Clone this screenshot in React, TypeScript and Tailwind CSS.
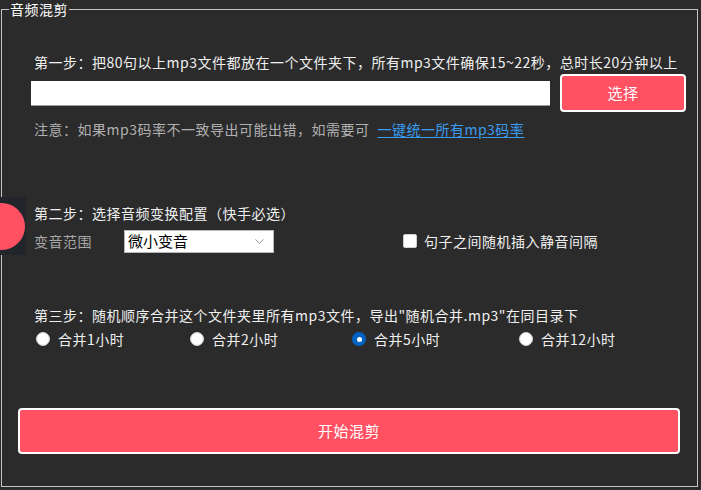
import { ChevronDown } from "lucide-react";

const font = { fontFamily: '"Noto Sans CJK SC", "Noto Sans", sans-serif' };

function Radio({ label, checked, left }: { label: string; checked?: boolean; left: string }) {
  return (
    <div className={`flex items-center ${left}`}>
      {checked ? (
        <span className="flex h-[14px] w-[14px] items-center justify-center rounded-full bg-[#0063c4]">
          <span className="h-[5px] w-[5px] rounded-full bg-white" />
        </span>
      ) : (
        <span className="h-[14px] w-[14px] rounded-full border border-[#d0d0d0] bg-white" />
      )}
      <span className="ml-[8px]">{label}</span>
    </div>
  );
}

export default function App() {
  return (
    <div
      className="relative h-[490px] w-[701px] bg-[#2b2b2b] pl-[1px] pt-[9px] text-[14px] leading-[20px] tracking-[0.5px] whitespace-nowrap text-[#f0f0f0]"
      style={font}
    >
      <div className="relative h-[478px] w-[697px] border border-[#c4c4c4]">
        <div className="absolute left-[7px] top-[-10px] bg-[#2b2b2b] px-[1px] leading-[18px] text-white">
          音频混剪
        </div>

        {/* step 1 */}
        <div className="mt-[42px] pl-[32px]">
          第一步：把80句以上mp3文件都放在一个文件夹下，所有mp3文件确保15~22秒，总时长20分钟以上
        </div>
        <div className="mt-[2px] flex h-[38px] items-center pl-[29px]">
          <div className="h-[25px] w-[519px] border-b border-[#9a9a9a] bg-white" />
          <button className="ml-[10px] h-[38px] w-[126px] rounded-[4px] border-2 border-white bg-[#ff5162] text-[15px] text-white">
            选择
          </button>
        </div>
        <div className="mt-[7px] pl-[32px] text-[#b0b0b0]">
          注意：如果mp3码率不一致导出可能出错，如需要可
          <a className="ml-[8px] text-[#3a9cf0] underline underline-offset-2">一键统一所有mp3码率</a>
        </div>

        {/* step 2 */}
        <div className="mt-[64px] pl-[32px]">第二步：选择音频变换配置（快手必选）</div>
        <div className="mt-[6px] flex h-[24px] items-center">
          <span className="ml-[32px] w-[90px] text-[#a8a8a8]">变音范围</span>
          <div className="flex h-[23px] w-[150px] items-center justify-between border border-[#b8b8b8] bg-white pl-[3px] pr-[6px] text-[15px] tracking-normal text-black">
            <span>微小变音</span>
            <ChevronDown size={15} strokeWidth={1.2} className="text-[#707070]" />
          </div>
          <span className="ml-[129px] h-[14px] w-[14px] rounded-[2px] border border-[#d0d0d0] bg-white" />
          <span className="ml-[7px]">句子之间随机插入静音间隔</span>
        </div>

        {/* step 3 */}
        <div className="mt-[52px] pl-[32px]">
          第三步：随机顺序合并这个文件夹里所有mp3文件，导出"随机合并.mp3"在同目录下
        </div>
        <div className="mt-[4px] flex h-[20px] items-center pl-[34px]">
          <Radio label="合并1小时" left="w-[154px]" />
          <Radio label="合并2小时" left="w-[162px]" />
          <Radio label="合并5小时" checked left="w-[167px]" />
          <Radio label="合并12小时" left="" />
        </div>

        <div className="mt-[59px] pl-[16px]">
          <button className="h-[46px] w-[662px] rounded-[4px] border-2 border-white bg-[#ff5162] text-[15px] text-white">
            开始混剪
          </button>
        </div>
      </div>

      <div className="absolute left-0 top-[197px] h-[58px] w-[26px] overflow-hidden bg-[#22262b]">
        <div className="absolute left-[-22px] top-[6px] h-[47px] w-[47px] rounded-full bg-[#ff5162]" />
      </div>
    </div>
  );
}
